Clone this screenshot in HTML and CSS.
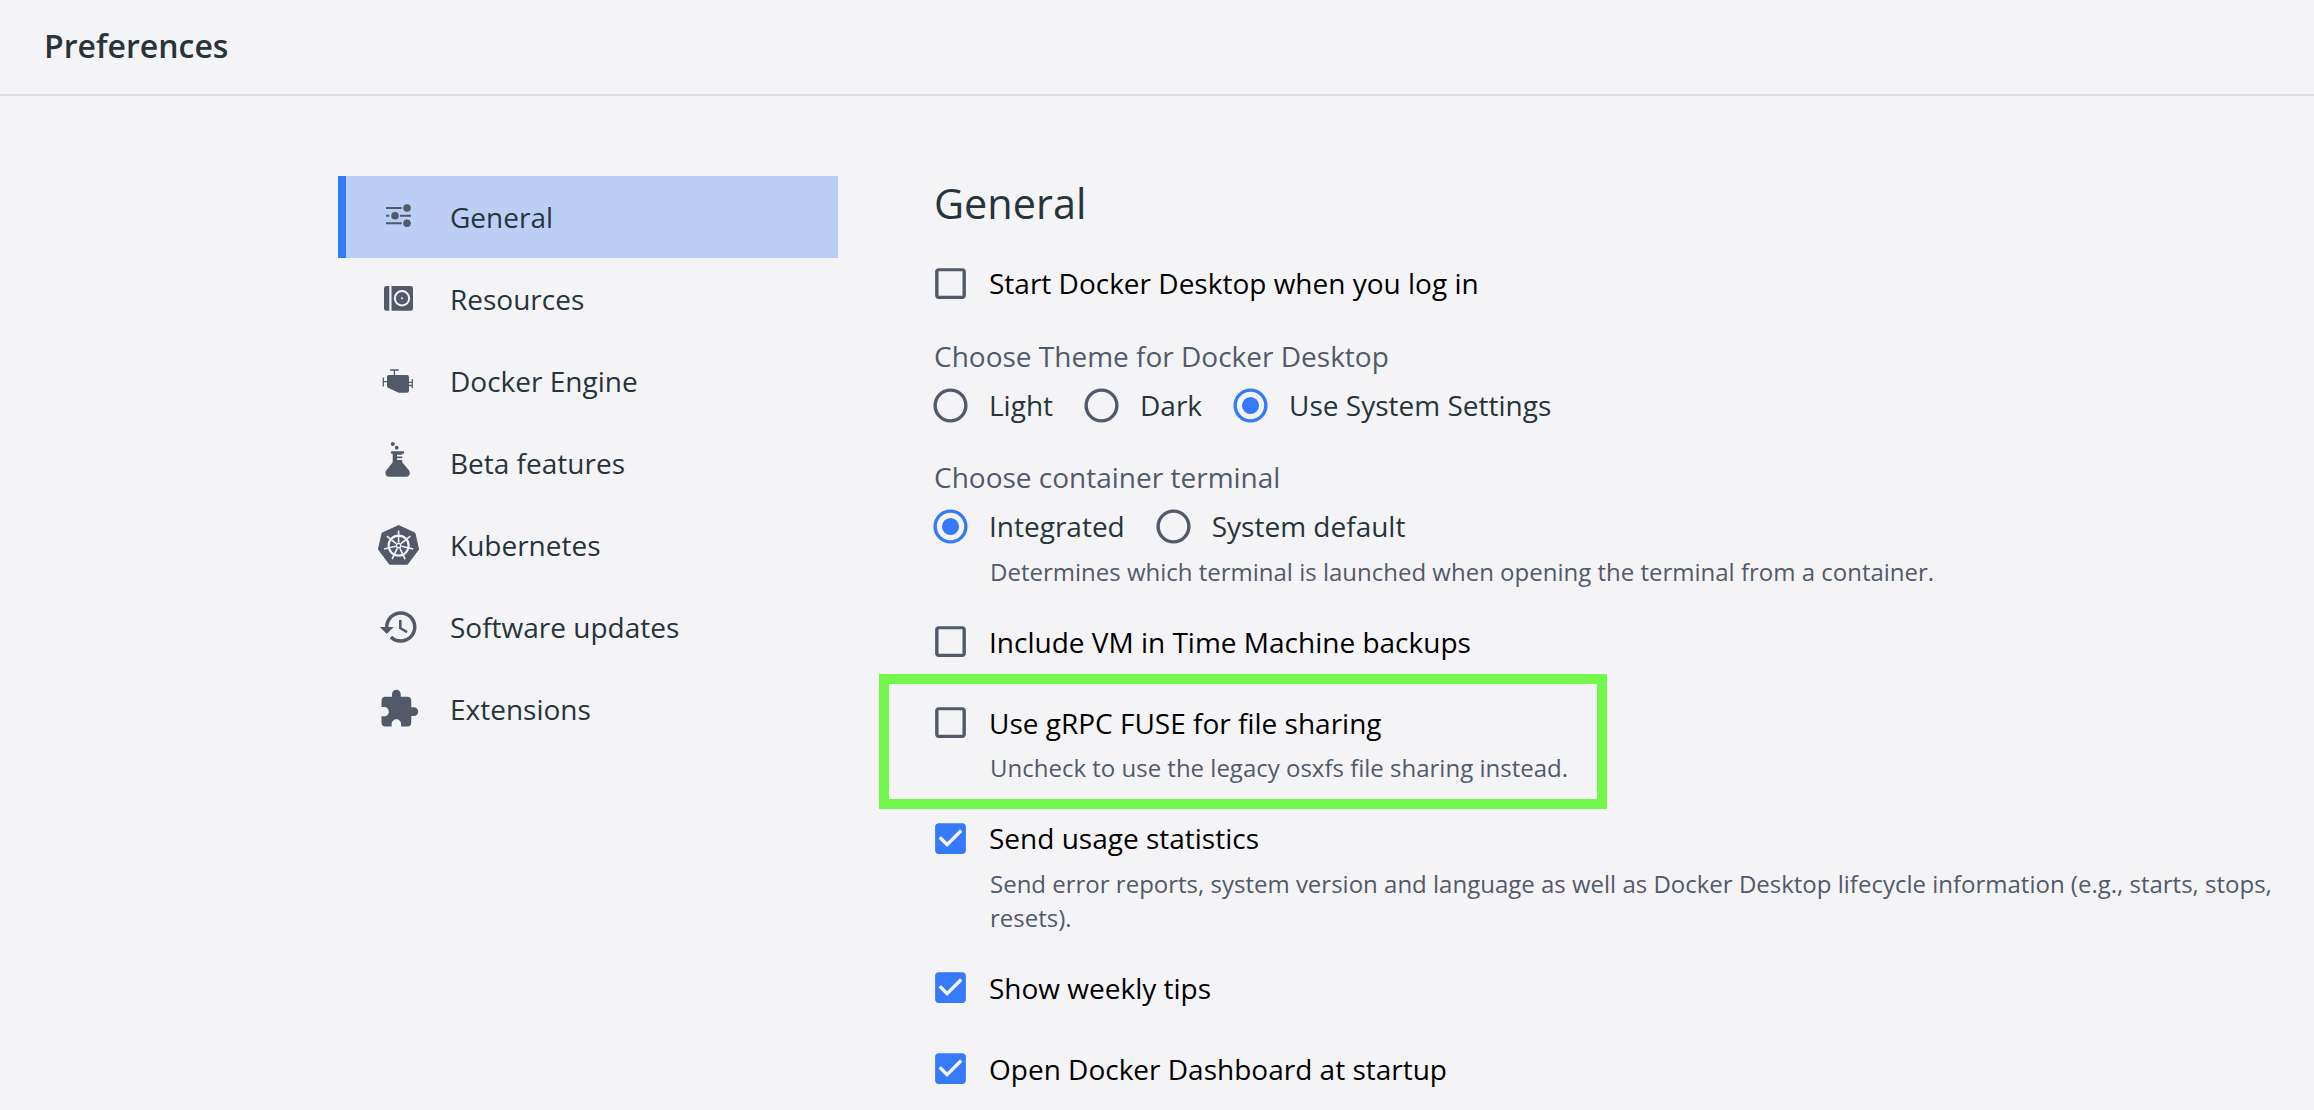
FILE: index.html
```html
<!DOCTYPE html>
<html lang="en">
<head>
<meta charset="utf-8">
<title>Preferences</title>
<link rel="stylesheet" href="styles.css">
</head>
<body>
<svg class="defs" aria-hidden="true">
  <symbol id="box" viewBox="0 0 24 24"><path d="M19 4.800v14.400H5V4.800h14m0-1.800H5c-1.100 0-2 .9-2 2v14c0 1.100.9 2 2 2h14c1.100 0 2-.9 2-2V5c0-1.100-.9-2-2-2z"/></symbol>
  <symbol id="box-on" viewBox="0 0 24 24"><path d="M19 3H5c-1.110 0-2 .9-2 2v14c0 1.100.89 2 2 2h14c1.110 0 2-.9 2-2V5c0-1.100-.89-2-2-2zm-9 14l-5-5 1.410-1.410L10 14.170l7.590-7.590L19 8l-9 9z"/></symbol>
  <symbol id="radio" viewBox="0 0 24 24"><circle cx="12" cy="12" r="9" fill="none" stroke="currentColor" stroke-width="2"/></symbol>
  <symbol id="radio-on" viewBox="0 0 24 24"><circle cx="12" cy="12" r="9" fill="none" stroke="currentColor" stroke-width="2"/><circle cx="12" cy="12" r="5"/></symbol>
</svg>

<header class="header"><h1 class="header-title">Preferences</h1></header>

<div class="page">
  <nav class="nav">
    <a class="nav-item active">
      <svg class="icon" viewBox="0 0 42 42"><path d="M8 12h15.700M8 19.700h3.300M22 19.700h11M8 27.300h15.700" stroke="currentColor" stroke-width="2"/><circle cx="29" cy="12" r="3.800"/><circle cx="17" cy="19.700" r="3.800"/><circle cx="29" cy="27.300" r="3.800"/></svg>
      General
    </a>
    <a class="nav-item">
      <svg class="icon" viewBox="0 0 42 42"><path d="M11.300 8v24.800H8.300a2.300 2.300 0 0 1-2.300-2.300V10.300A2.300 2.300 0 0 1 8.300 8zM13.500 8h19.200A2.300 2.300 0 0 1 35 10.300v20.200a2.300 2.300 0 0 1-2.300 2.300H13.500z"/><circle cx="24" cy="20.300" r="7.200" fill="none" stroke="#f4f4f6" stroke-width="2"/><circle cx="24" cy="20.300" r="1" fill="#f4f4f6"/></svg>
      Resources
    </a>
    <a class="nav-item">
      <svg class="icon" viewBox="0 0 42 42"><path d="M10.500 15H29a2 2 0 0 1 2 2v13.700a2 2 0 0 1-2 2H21.500a4 4 0 0 1-2-.4L10 27.700a1.800 1.800 0 0 1-1-1.600V16.500a1.500 1.500 0 0 1 1.500-1.500z"/><path d="M12 10h8.700M16.400 10v5M5.300 17.500v9M5.300 21.700H9M34.300 19v9.300M31 22.300h3.300M31 25.500h3.300" fill="none" stroke="currentColor" stroke-width="1.300"/></svg>
      Docker Engine
    </a>
    <a class="nav-item">
      <svg class="icon" viewBox="0 0 42 42"><circle cx="14.800" cy="2" r="2"/><circle cx="18.700" cy="5.700" r="1.900"/><path d="M14 9.300h11a1.200 1.200 0 0 1 0 2.400h-.8v1.100H19v1.700h5.200v1.700H19v1.700h5.200v2.300l6.900 8.300c1.500 2.500.5 6.200-2.400 6.200H10.600c-2.900 0-3.900-3.700-2.400-6.200l6.500-8.300v-8.500H14a1.200 1.200 0 0 1 0-2.400z"/></svg>
      Beta features
    </a>
    <a class="nav-item">
      <svg class="icon" viewBox="0 0 42 42"><path d="M20.600 1.600 36.900 9l3.700 16.300-11.100 14.900H11.500L.400 25.300 4.200 9z" stroke="currentColor" stroke-width="1" stroke-linejoin="round"/>
        <g transform="translate(20.600 21.600)" fill="none" stroke="#f4f4f6"><circle r="10" stroke-width="2.200"/><circle r="2.200" stroke-width="1.400"/>
          <g stroke-width="1.600"><path d="M0-3V-15"/><path d="M0-3V-15" transform="rotate(51.430)"/><path d="M0-3V-15" transform="rotate(102.860)"/><path d="M0-3V-15" transform="rotate(154.290)"/><path d="M0-3V-15" transform="rotate(205.710)"/><path d="M0-3V-15" transform="rotate(257.140)"/><path d="M0-3V-15" transform="rotate(308.570)"/></g></g></svg>
      Kubernetes
    </a>
    <a class="nav-item">
      <svg class="icon" viewBox="0 0 24 24"><path d="M13 3c-4.970 0-9 4.030-9 9H1l3.890 3.890.070.140L9 12H6c0-3.870 3.130-7 7-7s7 3.130 7 7-3.130 7-7 7c-1.930 0-3.680-.790-4.940-2.060l-1.420 1.420C8.270 19.990 10.510 21 13 21c4.970 0 9-4.030 9-9s-4.030-9-9-9zm-1 5v5l4.280 2.540.72-1.210-3.500-2.080V8H12z"/></svg>
      Software updates
    </a>
    <a class="nav-item">
      <svg class="icon" viewBox="0 0 24 24"><path d="M20.500 11H19V7c0-1.100-.9-2-2-2h-4V3.500C13 2.120 11.880 1 10.500 1S8 2.120 8 3.500V5H4c-1.100 0-1.990.9-1.990 2v3.800H3.500c1.490 0 2.700 1.210 2.700 2.700s-1.210 2.700-2.700 2.700H2V20c0 1.100.9 2 2 2h3.800v-1.500c0-1.490 1.210-2.700 2.700-2.700 1.490 0 2.700 1.210 2.700 2.700V22H17c1.100 0 2-.9 2-2v-4h1.500c1.380 0 2.500-1.120 2.500-2.500S21.880 11 20.500 11z"/></svg>
      Extensions
    </a>
  </nav>

  <main class="settings">
    <h2 class="title">General</h2>

    <section class="option">
      <label class="choice"><svg class="icon"><use href="#box"/></svg>Start Docker Desktop when you log in</label>
    </section>

    <section class="group">
      <p class="group-label">Choose Theme for Docker Desktop</p>
      <div class="radios">
        <label class="choice"><svg class="icon"><use href="#radio"/></svg>Light</label>
        <label class="choice"><svg class="icon"><use href="#radio"/></svg>Dark</label>
        <label class="choice"><svg class="icon on"><use href="#radio-on"/></svg>Use System Settings</label>
      </div>
    </section>

    <section class="group">
      <p class="group-label">Choose container terminal</p>
      <div class="radios">
        <label class="choice"><svg class="icon on"><use href="#radio-on"/></svg>Integrated</label>
        <label class="choice"><svg class="icon"><use href="#radio"/></svg>System default</label>
      </div>
      <p class="hint">Determines which terminal is launched when opening the terminal from a container.</p>
    </section>

    <section class="option">
      <label class="choice"><svg class="icon"><use href="#box"/></svg>Include VM in Time Machine backups</label>
    </section>

    <section class="option highlighted">
      <label class="choice"><svg class="icon"><use href="#box"/></svg>Use gRPC FUSE for file sharing</label>
      <p class="hint">Uncheck to use the legacy osxfs file sharing instead.</p>
    </section>

    <section class="option after-hint">
      <label class="choice"><svg class="icon on"><use href="#box-on"/></svg>Send usage statistics</label>
      <p class="hint">Send error reports, system version and language as well as Docker Desktop lifecycle information (e.g., starts, stops, resets).</p>
    </section>

    <section class="option after-hint">
      <label class="choice"><svg class="icon on"><use href="#box-on"/></svg>Show weekly tips</label>
    </section>

    <section class="option">
      <label class="choice"><svg class="icon on"><use href="#box-on"/></svg>Open Docker Dashboard at startup</label>
    </section>
  </main>
</div>
</body>
</html>
```
FILE: styles.css
```css
*, *::after { box-sizing: border-box; }

body {
  margin: 0;
  height: 1110px;
  overflow: hidden;
  background: #f4f4f6;
  color: #27343b;
  font: 28px/40px "Open Sans", sans-serif;
}

h1, h2, p { margin: 0; font-weight: 400; }

.defs { display: none; }

.icon {
  flex: none;
  width: 42px;
  height: 42px;
  color: #525a69;
  fill: currentColor;
}
.icon.on { color: #357af9; }

.header {
  display: flex;
  align-items: center;
  height: 96px;
  padding: 0 44px 3px;
  border-bottom: 2px solid #dcdcdf;
}
.header-title {
  font-size: 32px;
  font-weight: 600;
}

.page {
  display: flex;
  gap: 92px;
  padding: 79px 0 0 338px;
}

.nav {
  flex: none;
  width: 500px;
  padding-top: 1px;
}
.nav-item {
  display: flex;
  align-items: center;
  gap: 30px;
  height: 82px;
  padding-left: 32px;
  border-left: 8px solid transparent;
}
.nav-item.active {
  background: #bacef6;
  border-left-color: #357af9;
}

.settings { width: 1350px; }

.title {
  margin-bottom: 31px;
  padding-left: 4px;
  font-size: 41.4px;
  line-height: 56px;
}

.choice {
  display: flex;
  align-items: center;
  gap: 18px;
  height: 42px;
  white-space: nowrap;
}
.choice .icon {
  width: 41px;
  height: 41px;
}

.option { margin-top: 39px; color: #000; }
.title + .option { margin-top: 0; }
.option.after-hint { margin-top: 32px; }

.group { margin-top: 32px; }
.group + .option { margin-top: 32px; }
.group-label {
  margin-bottom: 8px;
  padding-left: 4px;
  color: #525a69;
}
.group + .group { margin-top: 31px; }

.radios { display: flex; gap: 28px; }

.hint {
  margin-top: 7.5px;
  padding-left: 60px;
  color: #525a69;
  font-size: 24px;
  line-height: 34px;
}

.highlighted { position: relative; }
/* callout frame around the file sharing option */
.highlighted::after {
  content: "";
  position: absolute;
  left: -51px;
  top: -28px;
  width: 728px;
  height: 135px;
  border: 10px solid #72f84a;
}
```
